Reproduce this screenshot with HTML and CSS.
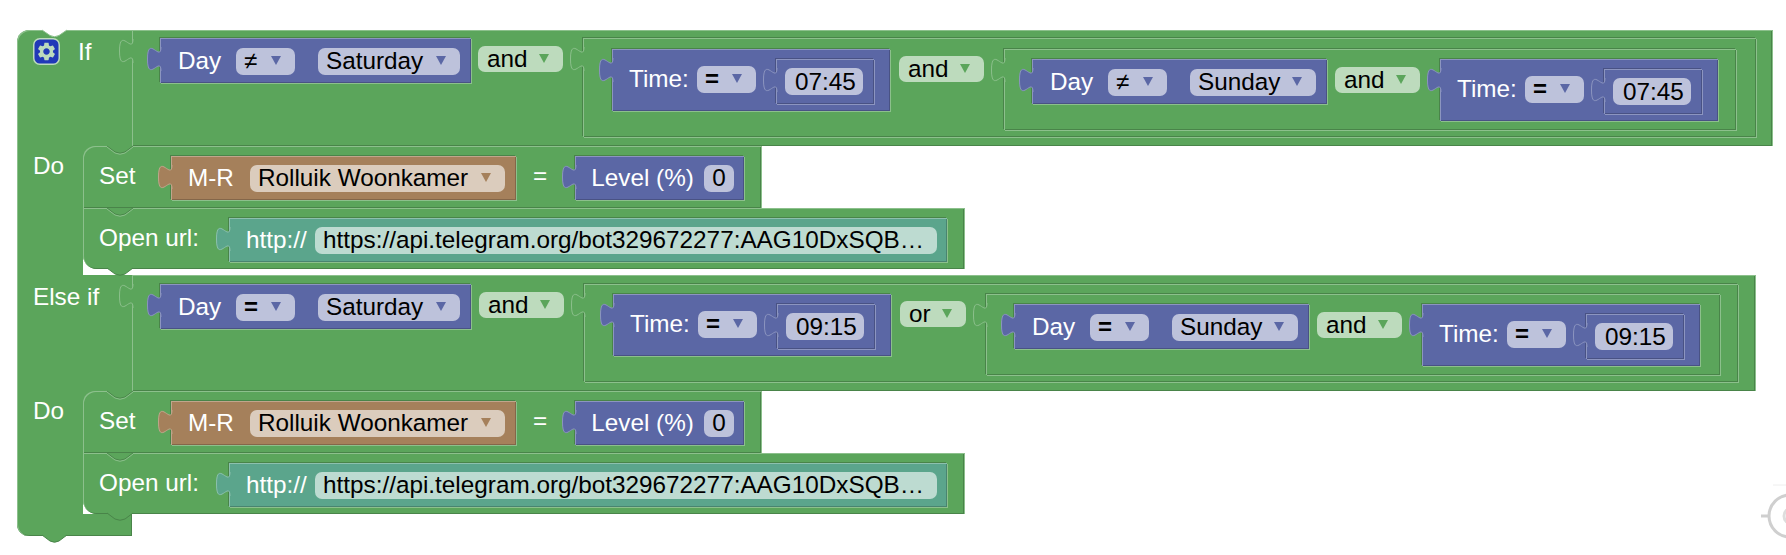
FILE: index.html
```html
<!DOCTYPE html>
<html lang="en">
<head>
  <meta charset="UTF-8">
  <title>Blocks</title>
  <link rel="stylesheet" href="styles.css">
</head>
<body>
  <svg class="defs" width="0" height="0">
    <symbol id="tab" viewBox="0 -3 15 30" overflow="visible">
      <path d="M15 0 C15 16 1.5 -13 1.5 12 S15 8 15 24"/>
    </symbol>
  </svg>

  <div class="if-block green">
    <svg class="notch-cut" viewBox="0 0 25 7"><path d="M0 0 L8 5.5 Q12.5 8 17 5.5 L25 0"/></svg>

    <!-- If -->
    <div class="branch">
      <div class="cond-label first">
        <svg class="gear" viewBox="0 0 27 27">
          <rect x="0.75" y="0.75" width="25.5" height="25.5" rx="6"/>
          <path transform="translate(2.7 2.7) scale(0.9)" d="M19.14 12.94c.04-.3.06-.61.06-.94 0-.32-.02-.64-.07-.94l2.03-1.58c.18-.14.23-.41.12-.61l-1.92-3.32c-.12-.22-.37-.29-.59-.22l-2.39.96c-.5-.38-1.03-.7-1.62-.94l-.36-2.54c-.04-.24-.24-.41-.48-.41h-3.84c-.24 0-.43.17-.47.41l-.36 2.54c-.59.24-1.13.57-1.62.94l-2.39-.96c-.22-.08-.47 0-.59.22L2.74 8.87c-.12.21-.08.47.12.61l2.03 1.58c-.05.3-.09.63-.09.94s.02.64.07.94l-2.03 1.58c-.18.14-.23.41-.12.61l1.92 3.32c.12.22.37.29.59.22l2.39-.96c.5.38 1.03.7 1.62.94l.36 2.54c.05.24.24.41.48.41h3.84c.24 0 .44-.17.47-.41l.36-2.54c.59-.24 1.13-.56 1.62-.94l2.39.96c.22.08.47 0 .59-.22l1.92-3.32c.12-.22.07-.47-.12-.61l-2.01-1.58zM12 15.6c-1.98 0-3.6-1.62-3.6-3.6s1.62-3.6 3.6-3.6 3.6 1.62 3.6 3.6-1.62 3.6-3.6 3.6z"/>
        </svg>
        <span class="label">If</span>
      </div>
      <div class="cond-body body-if">
        <svg class="tab"><use href="#tab"/></svg>
        <div class="block purple day">
          <svg class="tab"><use href="#tab"/></svg>
          <span class="label">Day</span>
          <span class="field op"><b class="sym thin">≠</b><i class="arrow"></i></span>
          <span class="field saturday">Saturday<i class="arrow"></i></span>
        </div>
        <span class="field logic and first-logic">and<i class="arrow"></i></span>
        <div class="block green nest nest-a">
          <svg class="tab"><use href="#tab"/></svg>
          <div class="block purple time">
            <svg class="tab"><use href="#tab"/></svg>
            <span class="label">Time:</span>
            <span class="field op"><b class="sym">=</b><i class="arrow"></i></span>
            <div class="block purple sub">
              <svg class="tab"><use href="#tab"/></svg>
              <span class="field clock">07:45</span>
            </div>
          </div>
          <span class="field logic and">and<i class="arrow"></i></span>
          <div class="block green nest nest-b">
            <svg class="tab"><use href="#tab"/></svg>
            <div class="block purple day">
              <svg class="tab"><use href="#tab"/></svg>
              <span class="label">Day</span>
              <span class="field op"><b class="sym thin">≠</b><i class="arrow"></i></span>
              <span class="field sunday">Sunday<i class="arrow"></i></span>
            </div>
            <span class="field logic and">and<i class="arrow"></i></span>
            <div class="block purple time">
              <svg class="tab"><use href="#tab"/></svg>
              <span class="label">Time:</span>
              <span class="field op"><b class="sym">=</b><i class="arrow"></i></span>
              <div class="block purple sub">
                <svg class="tab"><use href="#tab"/></svg>
                <span class="field clock">07:45</span>
              </div>
            </div>
          </div>
        </div>
      </div>
    </div>

    <div class="do">
      <div class="do-label"><span class="label">Do</span></div>
      <div class="stmts">
        <div class="stmt stmt-set">
          <svg class="notch-line" viewBox="0 0 26 9"><path class="fill" d="M0 0 L8 6 Q13 8.5 18 6 L26 0 Z"/><path class="lo" d="M0 0 L8 6 Q13 8.5 18 6 L26 0"/><path class="hi" d="M0 1 L8 7 Q13 9.5 18 7 L26 1"/></svg>
          <span class="label set-label">Set</span>
          <div class="block brown device">
            <svg class="tab"><use href="#tab"/></svg>
            <span class="label">M-R</span>
            <span class="field rolluik">Rolluik Woonkamer<i class="arrow"></i></span>
          </div>
          <span class="label eq">=</span>
          <div class="block purple level">
            <svg class="tab"><use href="#tab"/></svg>
            <span class="label">Level (%)</span>
            <span class="field zero">0</span>
          </div>
        </div>
        <div class="stmt stmt-open">
          <svg class="notch-line" viewBox="0 0 26 9"><path class="fill" d="M0 0 L8 6 Q13 8.5 18 6 L26 0 Z"/><path class="lo" d="M0 0 L8 6 Q13 8.5 18 6 L26 0"/><path class="hi" d="M0 1 L8 7 Q13 9.5 18 7 L26 1"/></svg>
          <span class="label open-label">Open url:</span>
          <div class="block teal url">
            <svg class="tab"><use href="#tab"/></svg>
            <span class="label">http://</span>
            <span class="field link">https://api.telegram.org/bot329672277:AAG10DxSQB…</span>
          </div>
          <svg class="notch-tab" viewBox="0 0 26 9"><path d="M0 0 L8 6 Q13 8.5 18 6 L26 0"/></svg>
        </div>
      </div>
    </div>

    <!-- Else if -->
    <div class="branch elseif">
      <div class="cond-label">
        <span class="label">Else if</span>
      </div>
      <div class="cond-body body-else">
        <svg class="tab"><use href="#tab"/></svg>
        <div class="block purple day">
          <svg class="tab"><use href="#tab"/></svg>
          <span class="label">Day</span>
          <span class="field op"><b class="sym">=</b><i class="arrow"></i></span>
          <span class="field saturday">Saturday<i class="arrow"></i></span>
        </div>
        <span class="field logic and">and<i class="arrow"></i></span>
        <div class="block green nest nest-a">
          <svg class="tab"><use href="#tab"/></svg>
          <div class="block purple time">
            <svg class="tab"><use href="#tab"/></svg>
            <span class="label">Time:</span>
            <span class="field op"><b class="sym">=</b><i class="arrow"></i></span>
            <div class="block purple sub">
              <svg class="tab"><use href="#tab"/></svg>
              <span class="field clock">09:15</span>
            </div>
          </div>
          <span class="field logic or">or<i class="arrow"></i></span>
          <div class="block green nest nest-b">
            <svg class="tab"><use href="#tab"/></svg>
            <div class="block purple day">
              <svg class="tab"><use href="#tab"/></svg>
              <span class="label">Day</span>
              <span class="field op"><b class="sym">=</b><i class="arrow"></i></span>
              <span class="field sunday">Sunday<i class="arrow"></i></span>
            </div>
            <span class="field logic and">and<i class="arrow"></i></span>
            <div class="block purple time">
              <svg class="tab"><use href="#tab"/></svg>
              <span class="label">Time:</span>
              <span class="field op"><b class="sym">=</b><i class="arrow"></i></span>
              <div class="block purple sub">
                <svg class="tab"><use href="#tab"/></svg>
                <span class="field clock">09:15</span>
              </div>
            </div>
          </div>
        </div>
      </div>
    </div>

    <div class="do do-last">
      <div class="do-label"><span class="label">Do</span></div>
      <div class="stmts">
        <div class="stmt stmt-set">
          <svg class="notch-line" viewBox="0 0 26 9"><path class="fill" d="M0 0 L8 6 Q13 8.5 18 6 L26 0 Z"/><path class="lo" d="M0 0 L8 6 Q13 8.5 18 6 L26 0"/><path class="hi" d="M0 1 L8 7 Q13 9.5 18 7 L26 1"/></svg>
          <span class="label set-label">Set</span>
          <div class="block brown device">
            <svg class="tab"><use href="#tab"/></svg>
            <span class="label">M-R</span>
            <span class="field rolluik">Rolluik Woonkamer<i class="arrow"></i></span>
          </div>
          <span class="label eq">=</span>
          <div class="block purple level">
            <svg class="tab"><use href="#tab"/></svg>
            <span class="label">Level (%)</span>
            <span class="field zero">0</span>
          </div>
        </div>
        <div class="stmt stmt-open">
          <svg class="notch-line" viewBox="0 0 26 9"><path class="fill" d="M0 0 L8 6 Q13 8.5 18 6 L26 0 Z"/><path class="lo" d="M0 0 L8 6 Q13 8.5 18 6 L26 0"/><path class="hi" d="M0 1 L8 7 Q13 9.5 18 7 L26 1"/></svg>
          <span class="label open-label">Open url:</span>
          <div class="block teal url">
            <svg class="tab"><use href="#tab"/></svg>
            <span class="label">http://</span>
            <span class="field link">https://api.telegram.org/bot329672277:AAG10DxSQB…</span>
          </div>
          <svg class="notch-tab" viewBox="0 0 26 9"><path d="M0 0 L8 6 Q13 8.5 18 6 L26 0"/></svg>
        </div>
      </div>
    </div>

    <div class="foot">
      <svg class="foot-tab" viewBox="0 0 25 8"><path d="M0 0 L8 6 Q12.5 8.5 17 6 L25 0"/></svg>
    </div>
  </div>

  <!-- workspace centre control, cut off by the window -->
  <svg class="center-mark" viewBox="0 0 26 64">
    <path class="faint" d="M13 1 H26"/>
    <circle cx="30" cy="32" r="21"/>
    <circle class="inner" cx="32" cy="32" r="8"/>
    <path d="M1 32 H9"/>
  </svg>
</body>
</html>
```

FILE: styles.css
```css
body {
  margin: 0;
  height: 555px;
  padding: 30px 0 0 17px;
  box-sizing: border-box;
  overflow: hidden;
  background: #fff;
  font-family: "Liberation Sans", Arial, sans-serif;
  font-size: 24.3px;
  color: #000;
}

.defs {
  position: absolute;
}

.green {
  --fill: #5ba55b;
  --hi: #8cc08c;
  --lo: #498449;
  --soft: #bddbbd;
}

.purple {
  --fill: #5b67a5;
  --hi: #8c95c0;
  --lo: #495284;
  --soft: #bdc2db;
}

.brown {
  --fill: #a5805b;
  --hi: #c0a68c;
  --lo: #846649;
  --soft: #dbccbd;
}

.teal {
  --fill: #5ba58c;
  --hi: #8cc0ae;
  --lo: #498470;
  --soft: #bddbd1;
}

/* edge colours a block takes from what it sits on */
.green .block {
  --p-hi: #8cc08c;
  --p-lo: #498449;
}

.purple .block {
  --p-hi: #8c95c0;
  --p-lo: #495284;
}

.if-block {
  position: relative;
  width: fit-content;
}

.label {
  display: block;
  flex: none;
  color: #fff;
  line-height: 27px;
  white-space: nowrap;
}

.block .label {
  line-height: 25px;
}

/* branches */
.branch {
  display: flex;
  width: fit-content;
  height: 116px;
  background: var(--fill);
}

.cond-label {
  display: flex;
  align-items: flex-start;
  width: 115px;
  box-sizing: border-box;
  padding: 8px 0 0 16px;
  box-shadow: inset 1px 0 0 var(--hi);
}

.cond-label.first {
  padding-top: 6px;
  border-top-left-radius: 12px;
  box-shadow: inset 1px 1px 0 var(--hi);
  background: var(--fill);
}

.cond-label.first .label {
  margin-top: 2px;
}

.branch:first-of-type {
  background: linear-gradient(var(--fill), var(--fill)) 12px 0 no-repeat;
}

.gear {
  flex: none;
  width: 27px;
  height: 27px;
  margin: 2px 18px 0 0;
}

.gear rect {
  fill: #2139b8;
  stroke: #bddbbd;
  stroke-width: 1.5;
}

.gear path {
  fill: #bddbbd;
}

.cond-body {
  position: relative;
  display: flex;
  align-items: flex-start;
  box-sizing: border-box;
  background: var(--fill);
  padding-left: 28px;
  box-shadow: inset 1px 1px 0 var(--hi), inset 0 -1px 0 var(--lo), inset -1px 0 0 var(--lo), 1px 0 0 var(--hi);
}

.body-if {
  padding-top: 8px;
  padding-right: 16px;
}

.body-else {
  padding-top: 9px;
  padding-right: 17px;
}

.first-logic {
  margin-left: 7px !important;
}

/* value blocks */
.block {
  position: relative;
  display: flex;
  align-items: flex-start;
  flex: none;
  box-sizing: border-box;
  background: var(--fill);
  box-shadow: inset 1px 1px 0 var(--hi), inset -1px -1px 0 var(--lo), 1px 1px 0 var(--p-hi), -1px -1px 0 var(--p-lo);
}

.tab {
  position: absolute;
  left: -14px;
  top: 9px;
  width: 15px;
  height: 30px;
  margin-top: -3px;
  overflow: visible;
  fill: var(--fill);
  stroke: var(--hi);
  stroke-width: 1;
}

.day {
  height: 45px;
  padding: 10px 11px 0 18px;
}

.day .label {
  width: 58px;
}

.day .field + .field {
  margin-left: 23px;
}

.time {
  height: 62px;
  padding: 10px 16px 0 17px;
}

.time .label {
  width: 68px;
  margin-top: 7px;
}

.time .op {
  margin-top: 7px;
}

.sub {
  height: 45px;
  margin-left: 20px;
  padding: 9px 11px 0 9px;
}

.nest {
  padding-left: 28px;
}

.nest-a {
  height: 99px;
  padding-top: 11px;
  padding-left: 29px;
}

.elseif .nest-a {
  height: 98px;
  padding-top: 10px;
}

.body-if .nest-a {
  padding-right: 20px;
}

.body-else .nest-a {
  padding-right: 18px;
}

.nest-b {
  height: 81px;
  padding-top: 10px;
  padding-right: 18px;
}

.elseif .nest-b {
  padding-right: 20px;
}

/* dropdowns and inputs */
.field {
  position: relative;
  display: block;
  flex: none;
  box-sizing: border-box;
  height: 27px;
  padding-left: 8px;
  border-radius: 7px;
  background: var(--soft);
  line-height: 25px;
  white-space: nowrap;
}

.arrow {
  position: absolute;
  right: 14px;
  top: 8px;
  width: 0;
  height: 0;
  border-left: 5px solid transparent;
  border-right: 5px solid transparent;
  border-top: 9px solid var(--fill);
}

.op {
  width: 59px;
}

.sym {
  font-size: 24px;
  font-weight: bold;
  line-height: 25px;
}

.thin {
  font-weight: normal;
}

.saturday {
  width: 142px;
}

.sunday {
  width: 126px;
}

.clock {
  width: 78px;
  padding-left: 10px;
  line-height: 27px;
}

.logic {
  height: 26px;
  margin: 8px 20px 0 8px;
  padding-left: 9px;
  line-height: 26px;
}

.time + .logic {
  margin-top: 7px;
  margin-left: 9px;
}

.and {
  width: 85px;
}

.or {
  width: 66px;
}

/* do statements */
.do {
  display: flex;
  width: fit-content;
  background: linear-gradient(var(--fill), var(--fill)) 66px 0 / 12px 12px no-repeat;
}

.do-label {
  width: 66px;
  flex: none;
  box-sizing: border-box;
  padding: 6px 0 0 16px;
  background: var(--fill);
  box-shadow: inset 1px 0 0 var(--hi);
}

.stmts {
  display: flex;
  flex-direction: column;
  align-items: flex-start;
  padding-bottom: 6px;
}

.do-last .stmts {
  padding-bottom: 0;
}

.stmt {
  position: relative;
  display: flex;
  align-items: flex-start;
  box-sizing: border-box;
  padding: 10px 17px 0 16px;
  background: var(--fill);
  box-shadow: inset 1px 1px 0 var(--hi), inset -1px -1px 0 var(--lo), 1px 0 0 var(--hi);
}

.stmt-set {
  height: 62px;
  border-top-left-radius: 12px;
}

.stmt-open {
  height: 61px;
  border-bottom-left-radius: 14px;
}

.stmt > .label {
  margin-top: 6px;
}

.set-label {
  width: 72px;
}

.open-label {
  width: 130px;
}

.eq {
  margin-left: 17px;
  margin-right: 28px;
}

.device {
  height: 44px;
  padding: 9px 11px 0 17px;
}

.device .label {
  width: 62px;
}

.rolluik {
  width: 255px;
}

.level {
  height: 44px;
  padding: 9px 10px 0 16px;
}

.level .label {
  width: 113px;
}

.zero {
  width: 30px;
  padding-left: 8px;
}

.url {
  height: 44px;
  padding: 9px 10px 0 17px;
}

.url .label {
  width: 69px;
}

.link {
  width: 622px;
}

/* connector notches */
.notch-cut {
  position: absolute;
  left: 25px;
  top: 0;
  width: 25px;
  height: 7px;
  z-index: 2;
  overflow: visible;
  fill: #fff;
  stroke: var(--hi);
}

.notch-line {
  position: absolute;
  left: 24px;
  top: 0;
  width: 26px;
  height: 9px;
  overflow: visible;
}

.notch-line path {
  fill: none;
  stroke-width: 1;
}

.notch-line .fill {
  fill: var(--fill);
  stroke: none;
}

.notch-line .lo {
  stroke: var(--lo);
}

.notch-line .hi {
  stroke: var(--hi);
}

.notch-tab {
  position: absolute;
  left: 24px;
  top: 100%;
  width: 26px;
  height: 9px;
  z-index: 2;
  margin-top: -1px;
  overflow: visible;
  fill: var(--fill);
  stroke: var(--lo);
}

.foot {
  position: relative;
  width: 115px;
  height: 22px;
  background: var(--fill);
  border-bottom-left-radius: 12px;
  box-shadow: inset 1px 0 0 var(--hi), inset 0 -1px 0 var(--lo), inset -1px 0 0 var(--lo);
}

.foot-tab {
  position: absolute;
  left: 25px;
  top: 100%;
  width: 25px;
  height: 8px;
  margin-top: -1px;
  overflow: visible;
  fill: var(--fill);
  stroke: var(--lo);
}

.center-mark {
  position: absolute;
  right: 0;
  top: 484px;
  width: 26px;
  height: 64px;
  fill: none;
  stroke: #cfcfcf;
  stroke-width: 3;
}

.center-mark .faint {
  stroke: #eeeeee;
  stroke-width: 1;
}

.center-mark .inner {
  stroke: #dddddd;
}
```
